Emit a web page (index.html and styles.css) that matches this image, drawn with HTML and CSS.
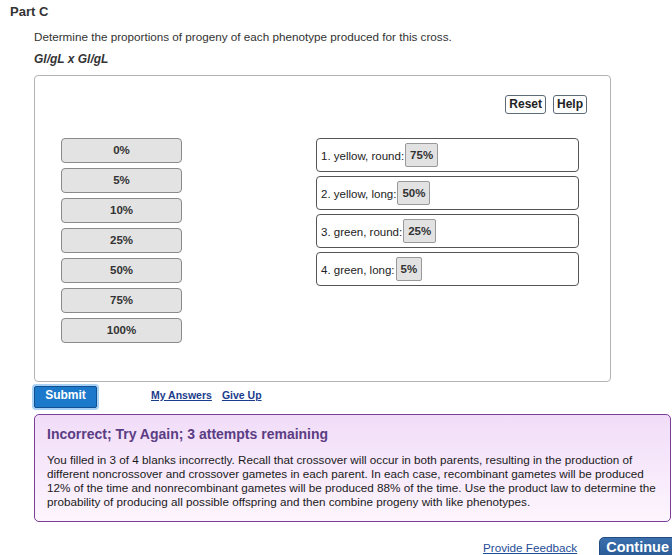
FILE: index.html
```html
<!DOCTYPE html>
<html lang="en">
<head>
<meta charset="utf-8">
<title>Part C</title>
<link rel="stylesheet" href="styles.css">
</head>
<body>
<div class="page">
  <h2 class="part">Part C</h2>
  <div class="content">
    <p class="prompt">Determine the proportions of progeny of each phenotype produced for this cross.</p>
    <p class="cross">Gl/gL x Gl/gL</p>
    <div class="workspace">
      <div class="toolbar">
        <button class="tool">Reset</button>
        <button class="tool">Help</button>
      </div>
      <div class="dnd">
        <ul class="choices">
          <li class="choice">0%</li>
          <li class="choice">5%</li>
          <li class="choice">10%</li>
          <li class="choice">25%</li>
          <li class="choice">50%</li>
          <li class="choice">75%</li>
          <li class="choice">100%</li>
        </ul>
        <ol class="targets">
          <li class="target"><span class="label">1. yellow, round:</span><span class="chip">75%</span></li>
          <li class="target"><span class="label">2. yellow, long:</span><span class="chip">50%</span></li>
          <li class="target"><span class="label">3. green, round:</span><span class="chip">25%</span></li>
          <li class="target"><span class="label">4. green, long:</span><span class="chip">5%</span></li>
        </ol>
      </div>
    </div>
    <div class="actions">
      <button class="submit">Submit</button>
      <div class="links">
        <a class="link" href="#">My Answers</a>
        <a class="link" href="#">Give Up</a>
      </div>
    </div>
    <div class="feedback">
      <h3 class="fb-title">Incorrect; Try Again; 3 attempts remaining</h3>
      <p class="fb-text">You filled in 3 of 4 blanks incorrectly. Recall that crossover will occur in both parents, resulting in the production of different noncrossover and crossover gametes in each parent. In each case, recombinant gametes will be produced 12% of the time and nonrecombinant gametes will be produced 88% of the time. Use the product law to determine the probability of producing all possible offspring and then combine progeny with like phenotypes.</p>
    </div>
    <div class="footer">
      <a class="plain-link" href="#">Provide Feedback</a>
      <button class="continue">Continue</button>
    </div>
  </div>
</div>
</body>
</html>
```
FILE: styles.css
```css
html, body {
  margin: 0;
  padding: 0;
  overflow: hidden;
  background: #ffffff;
}

body {
  font-family: "Liberation Sans", Arial, sans-serif;
  color: #222;
}

.page {
  width: 672px;
  height: 555px;
  overflow: hidden;
}

.part {
  margin: 0;
  padding: 4px 0 0 10px;
  font-size: 13px;
  line-height: 16px;
  font-weight: bold;
  color: #333;
}

.content {
  padding-left: 34px;
}

.prompt {
  margin: 10px 0 0;
  font-size: 11.7px;
  line-height: 14px;
  color: #333;
}

.cross {
  margin: 8px 0 0;
  font-size: 12px;
  line-height: 14px;
  font-weight: bold;
  font-style: italic;
  color: #333;
}

.workspace {
  box-sizing: border-box;
  margin-top: 9px;
  width: 577px;
  height: 307px;
  border: 1px solid #b3b3b3;
  border-radius: 4px;
  padding: 19px 23px 0 26px;
}

.toolbar {
  display: flex;
  justify-content: flex-end;
  gap: 7px;
}

.tool {
  font-family: "Liberation Sans", Arial, sans-serif;
  font-size: 12px;
  font-weight: bold;
  line-height: 17px;
  height: 19px;
  padding: 0 3px;
  margin: 0;
  border: 1px solid #5d6b78;
  border-radius: 3px;
  background: #fff;
  color: #222;
}

.dnd {
  display: flex;
  margin-top: 24px;
}

.choices {
  list-style: none;
  margin: 0;
  padding: 0;
  width: 121px;
  display: flex;
  flex-direction: column;
  gap: 5px;
}

.choice {
  box-sizing: border-box;
  height: 25px;
  line-height: 23px;
  text-align: center;
  font-size: 11.5px;
  font-weight: bold;
  color: #333;
  background: #e3e3e3;
  border: 1px solid #8a8a8a;
  border-radius: 4px;
}

.targets {
  list-style: none;
  margin: 0 0 0 134px;
  padding: 0;
  width: 263px;
  display: flex;
  flex-direction: column;
  gap: 4px;
}

.target {
  box-sizing: border-box;
  height: 34px;
  display: flex;
  align-items: center;
  padding: 0 0 0 4px;
  border: 1px solid #555;
  border-radius: 4px;
  font-size: 11.5px;
  color: #222;
}

.label {
  margin-top: 2px;
}

.chip {
  box-sizing: border-box;
  height: 24px;
  line-height: 22px;
  padding: 0 4px;
  margin-left: 1px;
  background: #e2e2e2;
  border: 1px solid #999;
  border-radius: 2px;
  font-weight: bold;
  color: #333;
}

.actions {
  display: flex;
  align-items: baseline;
  margin-top: 4px;
}

.submit {
  box-sizing: border-box;
  width: 63px;
  height: 22px;
  margin: 0;
  padding: 1px 0 5px;
  font-family: "Liberation Sans", Arial, sans-serif;
  font-size: 12px;
  line-height: 14px;
  font-weight: bold;
  color: #fff;
  background: #1b78cb;
  border: 1px solid #11508f;
  border-radius: 2px;
  box-shadow: 0 0 0 2px #a8d1f5;
}

.links {
  display: flex;
  gap: 10px;
  margin-left: 54px;
}

.link {
  font-size: 10.5px;
  font-weight: bold;
  color: #1b3c8c;
  text-decoration: underline;
}

.feedback {
  box-sizing: border-box;
  width: 637px;
  margin-top: 6px;
  padding: 10px 12px 12px;
  border: 1px solid #7a3d98;
  border-radius: 5px;
  background: linear-gradient(#f1dcf8, #fdf5fe);
}

.fb-title {
  margin: 0;
  font-size: 14px;
  line-height: 18px;
  font-weight: bold;
  color: #5b3d84;
}

.fb-text {
  margin: 10px 0 0;
  font-size: 11.7px;
  line-height: 14px;
  color: #1a1a1a;
}

.footer {
  display: flex;
  justify-content: flex-end;
  align-items: baseline;
  gap: 22px;
  margin-top: 15px;
  margin-right: -6px;
}

.plain-link {
  font-size: 11.7px;
  color: #1f4e96;
  text-decoration: underline;
}

.continue {
  margin: 0;
  padding: 1px 8px 3px 6px;
  font-family: "Liberation Sans", Arial, sans-serif;
  font-size: 14.5px;
  line-height: 17px;
  font-weight: bold;
  color: #fff;
  background: linear-gradient(#3b70ae, #275791);
  border: 1px solid #224c82;
  border-radius: 5px;
}
```
